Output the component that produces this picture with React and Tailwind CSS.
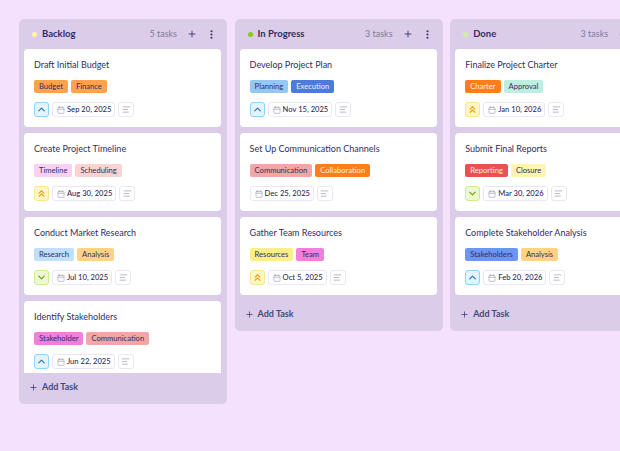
import { Plus, EllipsisVertical, ChevronUp, ChevronDown, ChevronsUp, Calendar, AlignLeft } from "lucide-react";

const columns = [
  {
    name: "Backlog",
    count: "5 tasks",
    dot: "bg-[#fdf6a8]",
    height: "h-[385px]",
    cards: [
      { title: "Draft Initial Budget", priority: "medium", date: "Sep 20, 2025", tags: [["Budget", "bg-[#ffa24d] text-[#2e2e63]"], ["Finance", "bg-[#ffa24d] text-[#2e2e63]"]] },
      { title: "Create Project Timeline", priority: "high", date: "Aug 30, 2025", tags: [["Timeline", "bg-[#fbd0f3] text-[#2e2e63]"], ["Scheduling", "bg-[#fad2d2] text-[#2e2e63]"]] },
      { title: "Conduct Market Research", priority: "low", date: "Jul 10, 2025", tags: [["Research", "bg-[#bfdffb] text-[#2e2e63]"], ["Analysis", "bg-[#ffd285] text-[#2e2e63]"]] },
      { title: "Identify Stakeholders", priority: "medium", date: "Jun 22, 2025", tags: [["Stakeholder", "bg-[#f17fdc] text-[#2e2e63]"], ["Communication", "bg-[#f2a7a7] text-[#2e2e63]"]] },
    ],
  },
  {
    name: "In Progress",
    count: "3 tasks",
    dot: "bg-[#84cc16]",
    height: "h-[312px]",
    cards: [
      { title: "Develop Project Plan", priority: "medium", date: "Nov 15, 2025", tags: [["Planning", "bg-[#93c8f5] text-[#2e2e63]"], ["Execution", "bg-[#4d7bdc] text-[#e6edfb]"]] },
      { title: "Set Up Communication Channels", priority: "none", date: "Dec 25, 2025", tags: [["Communication", "bg-[#f2a7a7] text-[#2e2e63]"], ["Collaboration", "bg-[#ff7d1a] text-[#fff3e6]"]] },
      { title: "Gather Team Resources", priority: "high", date: "Oct 5, 2025", tags: [["Resources", "bg-[#fdee8a] text-[#2e2e63]"], ["Team", "bg-[#f17fdc] text-[#2e2e63]"]] },
    ],
  },
  {
    name: "Done",
    count: "3 tasks",
    dot: "bg-[#d3ee9a]",
    height: "h-[312px]",
    cards: [
      { title: "Finalize Project Charter", priority: "high", date: "Jan 10, 2026", tags: [["Charter", "bg-[#ff7d1a] text-[#fff3e6]"], ["Approval", "bg-[#bdeee0] text-[#2e2e63]"]] },
      { title: "Submit Final Reports", priority: "low", date: "Mar 30, 2026", tags: [["Reporting", "bg-[#e9504f] text-[#fdeaea]"], ["Closure", "bg-[#fef5b5] text-[#2e2e63]"]] },
      { title: "Complete Stakeholder Analysis", priority: "medium", date: "Feb 20, 2026", tags: [["Stakeholders", "bg-[#6d95f2] text-[#2e2e63]"], ["Analysis", "bg-[#ffd285] text-[#2e2e63]"]] },
    ],
  },
];

function Priority({ level }) {
  if (level === "high") {
    return (
      <div className="w-[15px] h-[15px] rounded-[3px] border border-[#fde68a] bg-[#fef6c8] flex items-center justify-center text-[#f59e0b]">
        <ChevronsUp size={11} strokeWidth={2.5} />
      </div>
    );
  }
  if (level === "low") {
    return (
      <div className="w-[15px] h-[15px] rounded-[3px] border border-[#c9ef8f] bg-[#eef8d4] flex items-center justify-center text-[#65a30d]">
        <ChevronDown size={11} strokeWidth={2.5} />
      </div>
    );
  }
  if (level === "medium") {
    return (
      <div className="w-[15px] h-[15px] rounded-[3px] border border-[#8fd3fb] bg-[#e3f4fe] flex items-center justify-center text-[#2f6fb5]">
        <ChevronUp size={11} strokeWidth={2.5} />
      </div>
    );
  }
  return null;
}

function Card({ card }) {
  return (
    <div className="bg-white rounded-[4px] h-[78px] shrink-0 px-[10px] pt-[9px]">
      <div className="text-[9px] leading-[13px] text-[#2e2e63]">{card.title}</div>
      <div className="flex gap-[3px] mt-[9px]">
        {card.tags.map(([label, color]) => (
          <span key={label} className={`h-[13px] px-[5px] rounded-[2px] text-[7.6px] leading-[13px] ${color}`}>
            {label}
          </span>
        ))}
      </div>
      <div className="flex items-center gap-[3px] mt-[9px]">
        <Priority level={card.priority} />
        <div className="h-[15px] pl-[4px] pr-[3px] rounded-[3px] border border-[#e8e8f5] flex items-center gap-[2px] text-[7.6px] font-medium text-[#2e2e63]">
          <Calendar size={8} className="text-[#a3a3b8]" />
          {card.date}
        </div>
        <div className="w-[16px] h-[15px] rounded-[3px] border border-[#e8e8f5] flex items-center justify-center text-[#a3a3b8]">
          <AlignLeft size={9} />
        </div>
      </div>
    </div>
  );
}

function Column({ col }) {
  return (
    <div className={`w-[208px] shrink-0 bg-[#dbcdea] rounded-[5px] flex flex-col overflow-hidden ${col.height}`}>
      <div className="h-[30px] shrink-0 flex items-center pl-[13px] pr-[10px]">
        <span className={`w-[5px] h-[5px] rounded-full ${col.dot}`} />
        <span className="ml-[5px] text-[9.5px] font-bold text-[#2e2e63]">{col.name}</span>
        <span className="ml-auto text-[9px] text-[#7d7a9c]">{col.count}</span>
        <Plus size={10} className="ml-[10px] text-[#2e2e63]" />
        <EllipsisVertical size={11} strokeWidth={2.5} className="ml-[9px] text-[#2e2e63]" />
      </div>
      <div className="flex-1 min-h-0 overflow-hidden flex flex-col gap-[6px] pl-[5px] pr-[6px]">
        {col.cards.map((c) => (
          <Card key={c.title} card={c} />
        ))}
      </div>
      <div className="h-[31px] shrink-0 flex items-center gap-[4px] pl-[10px] pb-[3px] text-[#3d3a70]">
        <Plus size={9} />
        <span className="text-[9px] font-bold text-[#4a4678]">Add Task</span>
      </div>
    </div>
  );
}

export default function App() {
  return (
    <div className="w-[620px] h-[451px] overflow-hidden bg-[#f3e1fe] flex items-start gap-[7.6px] pl-[19px] pt-[19px] font-['Lato',sans-serif]">
      {columns.map((c) => (
        <Column key={c.name} col={c} />
      ))}
    </div>
  );
}
